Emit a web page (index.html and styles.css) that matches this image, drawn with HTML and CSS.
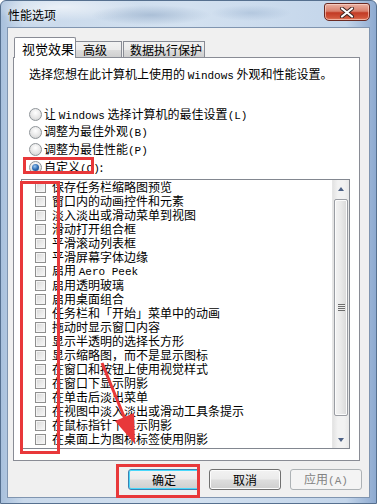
FILE: index.html
```html
<!DOCTYPE html>
<html lang="zh-CN">
<head>
<meta charset="utf-8">
<title>性能选项</title>
<link rel="stylesheet" href="styles.css">
</head>
<body>
<div class="win">
  <div class="titlebar">
    <span class="title">性能选项</span>
    <div class="close">
      <svg width="16" height="11" viewBox="0 0 16 11"><path d="M3 1.5 L13 9.5 M13 1.5 L3 9.5" stroke="#3b2320" stroke-width="4" stroke-linecap="round"/><path d="M3 1.5 L13 9.5 M13 1.5 L3 9.5" stroke="#ffffff" stroke-width="2.2" stroke-linecap="round"/></svg>
    </div>
  </div>
  <div class="client">
    <div class="tabs">
      <div class="tab sel">视觉效果</div>
      <div class="tab t2">高级</div>
      <div class="tab t3">数据执行保护</div>
    </div>
    <div class="panel">
      <p class="intro">选择您想在此计算机上使用的 <span class="lat">Windows</span> 外观和性能设置。</p>
      <div class="radios">
        <div class="radio"><span class="rb"></span><span class="txt">让 <span class="lat">Windows</span> 选择计算机的最佳设置<span class="lat">(L)</span></span></div>
        <div class="radio"><span class="rb"></span><span class="txt">调整为最佳外观<span class="lat">(B)</span></span></div>
        <div class="radio"><span class="rb"></span><span class="txt">调整为最佳性能<span class="lat">(P)</span></span></div>
        <div class="radio"><span class="rb on"></span><span class="txt">自定义<span class="lat">(C)</span>:</span></div>
      </div>
      <div class="list">
        <ul class="items">
          <li><span class="cb"></span><span class="txt">保存任务栏缩略图预览</span></li>
          <li><span class="cb"></span><span class="txt">窗口内的动画控件和元素</span></li>
          <li><span class="cb"></span><span class="txt">淡入淡出或滑动菜单到视图</span></li>
          <li><span class="cb"></span><span class="txt">滑动打开组合框</span></li>
          <li><span class="cb"></span><span class="txt">平滑滚动列表框</span></li>
          <li><span class="cb"></span><span class="txt">平滑屏幕字体边缘</span></li>
          <li><span class="cb"></span><span class="txt">启用 <span class="lat">Aero Peek</span></span></li>
          <li><span class="cb"></span><span class="txt">启用透明玻璃</span></li>
          <li><span class="cb"></span><span class="txt">启用桌面组合</span></li>
          <li><span class="cb"></span><span class="txt">任务栏和「开始」菜单中的动画</span></li>
          <li><span class="cb"></span><span class="txt">拖动时显示窗口内容</span></li>
          <li><span class="cb"></span><span class="txt">显示半透明的选择长方形</span></li>
          <li><span class="cb"></span><span class="txt">显示缩略图，而不是显示图标</span></li>
          <li><span class="cb"></span><span class="txt">在窗口和按钮上使用视觉样式</span></li>
          <li><span class="cb"></span><span class="txt">在窗口下显示阴影</span></li>
          <li><span class="cb"></span><span class="txt">在单击后淡出菜单</span></li>
          <li><span class="cb"></span><span class="txt">在视图中淡入淡出或滑动工具条提示</span></li>
          <li><span class="cb"></span><span class="txt">在鼠标指针下显示阴影</span></li>
          <li><span class="cb"></span><span class="txt">在桌面上为图标标签使用阴影</span></li>
        </ul>
        <div class="scrollbar">
          <div class="sb-btn"><span class="tri up"></span></div>
          <div class="sb-track">
            <div class="thumb"><span class="grip"></span></div>
          </div>
          <div class="sb-btn"><span class="tri down"></span></div>
        </div>
      </div>
    </div>
    <div class="buttons">
      <div class="btn def">确定</div>
      <div class="btn">取消</div>
      <div class="btn dis"><span class="txt">应用<span class="lat">(A)</span></span></div>
    </div>
  </div>
  <div class="mark m-radio"></div>
  <div class="mark m-list"></div>
  <div class="mark m-ok"></div>
  <svg class="arrow" width="377" height="504" viewBox="0 0 377 504">
    <line x1="101" y1="362" x2="124" y2="418" stroke="#e8383a" stroke-width="3"/>
    <polygon points="134,443 133,412 114,420" fill="#e8383a"/>
  </svg>
</div>
</body>
</html>
```
FILE: styles.css
```css
* { box-sizing: border-box; }
html, body { margin: 0; padding: 0; }
body {
  width: 377px;
  height: 504px;
  overflow: hidden;
  font-family: "Noto Sans CJK SC", "Noto Sans", sans-serif;
  font-size: 12px;
  color: #000;
}
.win {
  position: relative;
  width: 377px;
  height: 504px;
  background:
    radial-gradient(ellipse 60px 10px at 150px 14px, rgba(140,165,195,0.55), rgba(140,165,195,0) 100%),
    radial-gradient(ellipse 40px 8px at 250px 12px, rgba(150,175,205,0.45), rgba(150,175,205,0) 100%),
    radial-gradient(ellipse 80px 14px at 60px 6px, rgba(255,255,255,0.6), rgba(255,255,255,0) 100%),
    linear-gradient(90deg, #a8c0dc 0%, #c9d9eb 6%, #d3e1f0 50%, #c3d5ea 92%, #8eaad0 100%);
  border: 1px solid #56708f;
  border-radius: 6px 6px 0 0;
  display: flex;
  flex-direction: column;
}
.titlebar {
  height: 26px;
  display: flex;
  align-items: flex-start;
  justify-content: space-between;
  padding-left: 7px;
}
.title {
  margin-top: 6px;
  line-height: 16px;
  font-size: 12px;
  color: #000;
  text-shadow: 0 0 6px rgba(255,255,255,0.9);
}
.close {
  width: 46px;
  height: 18px;
  margin-right: 6px;
  margin-top: 2px;
  border: 1px solid #6b2a22;
  border-radius: 3px 3px 5px 5px;
  background: linear-gradient(180deg, #eab1a2 0%, #d9806c 45%, #c23a24 55%, #d0553b 85%, #e07d5f 100%);
  box-shadow: inset 0 0 0 1px rgba(255,220,210,0.6);
  display: flex;
  align-items: center;
  justify-content: center;
}
.client {
  margin-left: 6px;
  width: 363px;
  height: 471px;
  border: 1px solid #8095b0;
  background: #f0f0f0;
  display: flex;
  flex-direction: column;
}
.txt { white-space: nowrap; }
.lat {
  font-family: "Liberation Mono", monospace;
  font-size: 11px;
}
/* tabs */
.tabs {
  margin-left: 6px;
  margin-top: 9px;
  height: 20px;
  display: flex;
  align-items: flex-end;
  position: relative;
  z-index: 2;
}
.tab {
  height: 16px;
  line-height: 15px;
  border: 1px solid #898c95;
  border-bottom: none;
  background: linear-gradient(180deg, #f2f2f2 0%, #ebebeb 50%, #dddddd 51%, #cfcfcf 100%);
  padding: 0 5px;
  font-size: 12px;
  white-space: nowrap;
}
.tab.sel {
  height: 21px;
  width: 62px;
  margin-bottom: -1px;
  background: #ffffff;
  padding: 3px 0 0 7px;
  line-height: 15px;
  border-radius: 2px 2px 0 0;
  font-size: 13px;
}
.tab.t2 { width: 46px; border-left: none; padding-left: 7px; }
.tab.t3 { width: 82px; margin-left: 1px; padding-left: 6px; }
/* panel */
.panel {
  margin-left: 5px;
  width: 347px;
  height: 404px;
  border: 1px solid #898c95;
  background: #ffffff;
  display: flex;
  flex-direction: column;
  padding-left: 15px;
}
.intro {
  margin: 9px 0 0 0;
  line-height: 14px;
  white-space: nowrap;
}
.radios {
  margin-top: 23px;
  display: flex;
  flex-direction: column;
}
.radio {
  height: 17.6px;
  display: flex;
  align-items: center;
  gap: 2px;
  line-height: 14px;
}
.rb {
  width: 13px;
  height: 13px;
  border-radius: 50%;
  border: 1px solid #8f9599;
  background: radial-gradient(circle at 50% 35%, #ffffff 0%, #e6e6e6 55%, #c9cacb 100%);
  display: flex;
  align-items: center;
  justify-content: center;
  flex: none;
}
.rb.on::after {
  content: "";
  width: 7px;
  height: 7px;
  border-radius: 50%;
  background: radial-gradient(circle at 40% 35%, #9ac6f0 0%, #2d6bb3 50%, #173e73 100%);
}
/* list */
.list {
  margin-left: -8px;
  margin-top: 3px;
  width: 329px;
  height: 270px;
  border: 1px solid #828790;
  display: flex;
  position: relative;
}
.items {
  list-style: none;
  margin: 0;
  padding: 0;
  flex: 1;
  overflow: hidden;
}
.items li {
  height: 14px;
  line-height: 14px;
  display: flex;
  align-items: center;
  padding-left: 13px;
}
.cb {
  width: 11px;
  height: 11px;
  border: 1px solid #8f8f8f;
  background: linear-gradient(135deg, #d6d6d6 0%, #e9e9e9 50%, #f7f7f7 100%);
  box-shadow: inset 0 0 0 1px #f4f4f4;
  margin-right: 6px;
  flex: none;
}
.scrollbar {
  width: 17px;
  display: flex;
  flex-direction: column;
  background: linear-gradient(90deg, #e3e3e3 0%, #f2f2f2 30%, #f2f2f2 70%, #e8e8e8 100%);
  border-left: 1px solid #e6e6e6;
}
.sb-btn {
  height: 17px;
  display: flex;
  align-items: center;
  justify-content: center;
}
.tri {
  width: 0;
  height: 0;
  border-left: 3.5px solid transparent;
  border-right: 3.5px solid transparent;
}
.tri.up { border-bottom: 4px solid #4d6185; }
.tri.down { border-top: 4px solid #4d6185; }
.sb-track {
  flex: 1;
  padding: 2px 0 15px 0;
  display: flex;
}
.thumb {
  flex: 1;
  margin: 0 1px;
  border: 1px solid #9a9da3;
  border-radius: 2px;
  background: linear-gradient(90deg, #f3f3f3 0%, #e9e9e9 50%, #d8d8d8 100%);
  box-shadow: inset 0 0 0 1px #fbfbfb;
  display: flex;
  align-items: center;
  justify-content: center;
}
.grip {
  width: 7px;
  height: 7px;
  background: repeating-linear-gradient(180deg, #6d6d6d 0px, #6d6d6d 1px, #eeeeee 1px, #eeeeee 2px);
}
/* buttons */
.buttons {
  margin-top: 8px;
  display: flex;
  justify-content: flex-end;
  gap: 9px;
  padding-right: 7px;
}
.btn {
  width: 72px;
  height: 21px;
  border: 1px solid #707070;
  border-radius: 3px;
  background: linear-gradient(180deg, #f2f2f2 0%, #ebebeb 48%, #dddddd 52%, #cfcfcf 100%);
  box-shadow: inset 0 0 0 1px #fcfcfc;
  display: flex;
  align-items: center;
  justify-content: center;
  line-height: 14px;
}
.btn.def {
  border-color: #3c7fb1;
  box-shadow: inset 0 0 0 1px #48d8fb;
}
.btn.dis {
  color: #838383;
  border-color: #adb2b5;
  background: #f4f4f4;
  box-shadow: none;
}
/* annotations */
.mark {
  position: absolute;
  border: 3px solid #e8383a;
  pointer-events: none;
}
.m-radio { left: 22px; top: 156px; width: 71px; height: 17px; }
.m-list { left: 19px; top: 180px; width: 40px; height: 273px; }
.m-ok { left: 115px; top: 463px; width: 84px; height: 34px; }
.arrow {
  position: absolute;
  left: 0;
  top: 0;
  pointer-events: none;
}
```
